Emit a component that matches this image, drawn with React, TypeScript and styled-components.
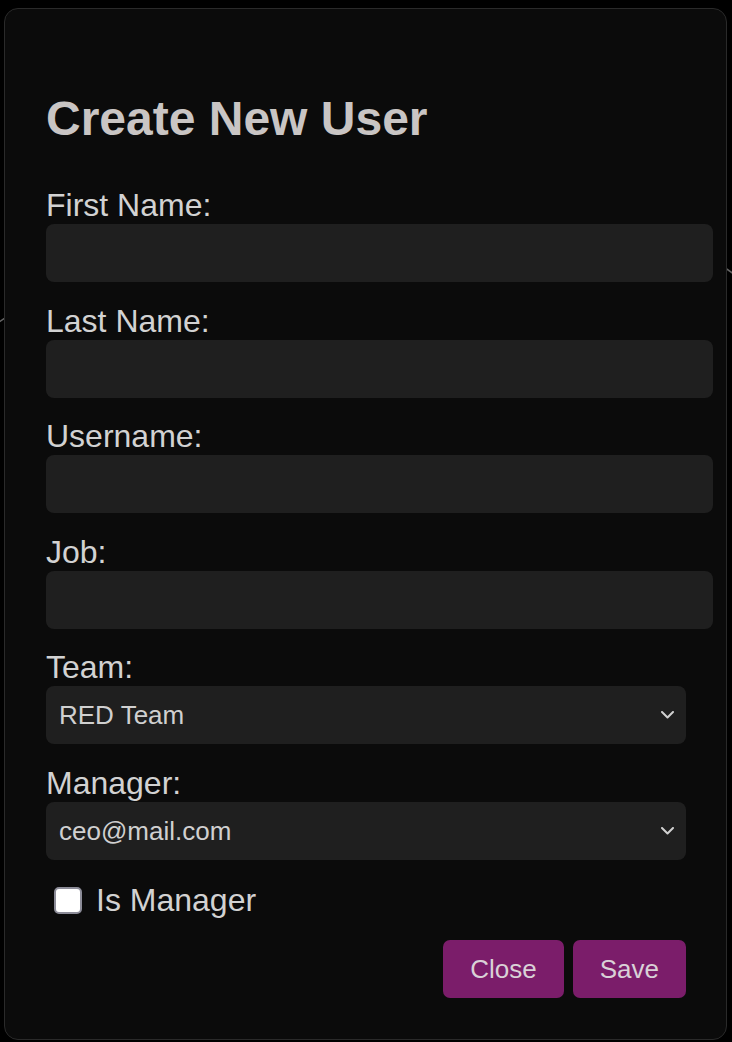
import React from "react";
import styled, { createGlobalStyle } from "styled-components";

const GlobalStyle = createGlobalStyle`
  html, body {
    margin: 0;
    padding: 0;
    background: #000000;
    font-family: "Liberation Sans", Arial, sans-serif;
  }
  * {
    box-sizing: border-box;
  }
`;

const Page = styled.div`
  position: relative;
  min-height: 1042px;
  display: flex;
  justify-content: flex-start;
  align-items: flex-start;
  padding: 8px 0 0 4px;
  overflow: hidden;
`;

// chart line from the page behind the modal
const Backdrop = styled.svg`
  position: absolute;
  left: 0;
  top: 0;
  width: 732px;
  height: 1042px;
`;

const Panel = styled.div`
  position: relative;
  width: 723px;
  height: 1032px;
  border: 1px solid #2a2a2a;
  border-radius: 14px;
  background: #0b0b0b;
  padding: 82px 41px 41px 41px;
`;

const Title = styled.h2`
  margin: 0 0 41px;
  font-size: 48px;
  font-weight: 700;
  line-height: normal;
  color: #c9c5c4;
`;

const Form = styled.form`
  width: 640px;
  display: flex;
  flex-direction: column;
`;

const Field = styled.div`
  margin-bottom: 20.6px;
`;

const Label = styled.label`
  display: block;
  font-size: 32px;
  line-height: 37px;
  color: #d2d2d2;
`;

const TextInput = styled.input`
  display: block;
  width: 667px;
  height: 58px;
  padding: 0 14px;
  border: none;
  border-radius: 8px;
  background: #1f1f1f;
  color: #dddddd;
  font-family: inherit;
  font-size: 26px;
  outline: none;
`;

const SelectWrap = styled.div`
  position: relative;
  width: 640px;
`;

const Select = styled.select`
  display: block;
  width: 100%;
  height: 58px;
  padding: 0 40px 0 13px;
  appearance: none;
  border: none;
  border-radius: 8px;
  background: #1f1f1f;
  color: #d0d0d0;
  font-family: inherit;
  font-size: 26px;
  outline: none;
`;

const Chevron = styled.svg`
  position: absolute;
  right: 12px;
  top: 50%;
  transform: translateY(-50%);
  pointer-events: none;
`;

const CheckRow = styled.label`
  display: flex;
  align-items: center;
  height: 40px;
  padding-left: 8px;
  gap: 14px;
  font-size: 32px;
  color: #d2d2d2;
`;

const Check = styled.input`
  appearance: none;
  width: 28px;
  height: 27px;
  margin: 0;
  background: #ffffff;
  border: 2px solid #8c8c98;
  border-radius: 5px;
`;

const Actions = styled.div`
  display: flex;
  justify-content: flex-end;
  gap: 9px;
  margin-top: 19.4px;
`;

const Button = styled.button`
  height: 58px;
  padding: 2px 27px 0;
  border: none;
  border-radius: 7px;
  background: #7b1d6a;
  color: #d9d1d7;
  font-family: inherit;
  font-size: 26px;
  cursor: pointer;
`;

const ChevronIcon = () => (
  <Chevron width="13" height="8" viewBox="0 0 13 8">
    <polyline
      points="1,1 6.5,6.5 12,1"
      fill="none"
      stroke="#d0d0d0"
      strokeWidth="2"
      strokeLinecap="round"
      strokeLinejoin="round"
    />
  </Chevron>
);

const textFields = ["First Name:", "Last Name:", "Username:", "Job:"];

const App = () => {
  return (
    <>
      <GlobalStyle />
      <Page>
        <Backdrop viewBox="0 0 732 1042">
          <path
            d="M -20 335 L 120 240 L 400 180 L 700 250 L 752 287"
            fill="none"
            stroke="#666666"
            strokeWidth="1.5"
          />
        </Backdrop>
        <Panel>
          <Title>Create New User</Title>
          <Form onSubmit={(e) => e.preventDefault()}>
            {textFields.map((label) => (
              <Field key={label}>
                <Label>{label}</Label>
                <TextInput type="text" />
              </Field>
            ))}
            <Field>
              <Label>Team:</Label>
              <SelectWrap>
                <Select defaultValue="red">
                  <option value="red">RED Team</option>
                  <option value="blue">BLUE Team</option>
                </Select>
                <ChevronIcon />
              </SelectWrap>
            </Field>
            <Field>
              <Label>Manager:</Label>
              <SelectWrap>
                <Select defaultValue="ceo">
                  <option value="ceo">ceo@mail.com</option>
                </Select>
                <ChevronIcon />
              </SelectWrap>
            </Field>
            <CheckRow>
              <Check type="checkbox" />
              Is Manager
            </CheckRow>
            <Actions>
              <Button type="button">Close</Button>
              <Button type="submit">Save</Button>
            </Actions>
          </Form>
        </Panel>
      </Page>
    </>
  );
};

export default App;
